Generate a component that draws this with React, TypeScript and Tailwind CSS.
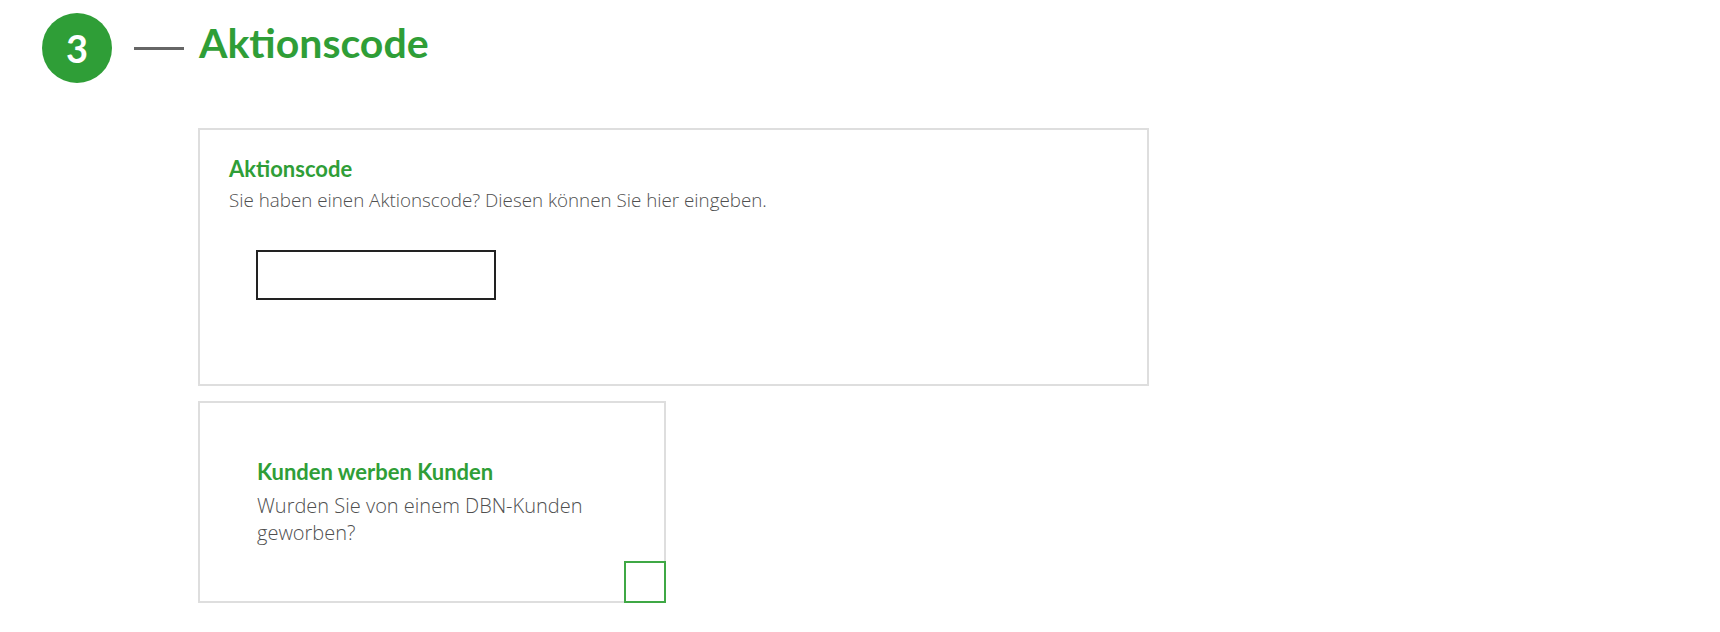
import React from 'react';

const heading = { fontFamily: 'Lato, "Noto Sans", sans-serif' };
const body = { fontFamily: '"Open Sans", "Noto Sans", sans-serif' };

export default function App() {
  return (
    <div className="min-h-[632px] bg-white pl-[42px] pt-[13px]" style={heading}>
      {/* Step header */}
      <div className="flex items-center">
        <div className="flex h-[70px] w-[70px] items-center justify-center rounded-full bg-[#2f9e37] text-[38px] font-bold leading-none text-white">
          3
        </div>
        <div className="ml-[22px] h-[3px] w-[50px] bg-[#666666]" />
        <h1 className="mb-[11px] ml-[15px] text-[41px] font-bold leading-none text-[#2f9e37]">Aktionscode</h1>
      </div>

      <div className="ml-[156px] mt-[45px] flex flex-col gap-[15px]">
        {/* Aktionscode box */}
        <div className="h-[258px] w-[951px] border-2 border-[#dedede] px-[29px] pt-[26px]">
          <h2 className="text-[22px] font-bold leading-[26px] text-[#2f9e37]">Aktionscode</h2>
          <p className="mt-[6px] text-[18.8px] font-light leading-[24px] text-[#4f4f4f]" style={body}>
            Sie haben einen Aktionscode? Diesen können Sie hier eingeben.
          </p>
          <input
            type="text"
            className="ml-[27px] mt-[38px] block h-[50px] w-[240px] border-2 border-[#222222] bg-white outline-none"
          />
        </div>

        {/* Kunden werben Kunden */}
        <div className="relative h-[202px] w-[468px] border-2 border-[#dedede] pl-[57px] pt-[56px]">
          <h2 className="text-[22px] font-bold leading-[26px] text-[#2f9e37]">Kunden werben Kunden</h2>
          <p className="mt-[7px] w-[360px] text-[20px] font-light leading-[27px] text-[#4f4f4f]" style={body}>
            Wurden Sie von einem DBN-Kunden geworben?
          </p>
          <div className="absolute -bottom-[2px] -right-[2px] h-[42px] w-[42px] border-2 border-[#3fa845] bg-white" />
        </div>
      </div>
    </div>
  );
}
